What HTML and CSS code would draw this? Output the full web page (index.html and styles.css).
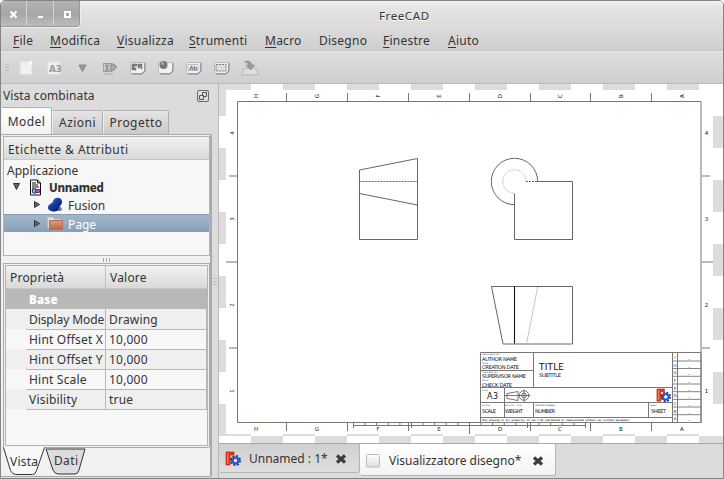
FILE: index.html
```html
<!DOCTYPE html>
<html lang="it">
<head>
<meta charset="utf-8">
<title>FreeCAD</title>
<link rel="stylesheet" href="styles.css">
</head>
<body>
<svg class="defs" width="0" height="0" aria-hidden="true">
  <defs>
    <linearGradient id="blue" x1="0" y1="0" x2="1" y2="1"><stop offset="0" stop-color="#5b8ae0"/><stop offset=".45" stop-color="#1539a0"/><stop offset="1" stop-color="#06145c"/></linearGradient>
    <linearGradient id="folder" x1="0" y1="0" x2="0" y2="1"><stop offset="0" stop-color="#d9a080"/><stop offset="1" stop-color="#c0623f"/></linearGradient>
    <linearGradient id="paper" x1="0" y1="0" x2="0" y2="1"><stop offset="0" stop-color="#fff"/><stop offset="1" stop-color="#ddd"/></linearGradient>
    <symbol id="logo" viewBox="0 0 16 16">
      <path d="M1 1h8v3H5v3h3v3H5v4H1z" fill="#ee3311" stroke="#a81b0c" stroke-width=".6"/>
      <path d="M2 2h1.500v11H2z" fill="#ff7a4a"/>
      <circle cx="10.500" cy="9.500" r="4.500" fill="none" stroke="#173a8e" stroke-width="2" stroke-dasharray="2 1.530"/>
      <circle cx="10.500" cy="9.500" r="2.900" fill="none" stroke="#2c5bc0" stroke-width="2.400"/>
      <circle cx="10.500" cy="9.500" r="1.500" fill="#eef"/>
    </symbol>
    <symbol id="cross" viewBox="0 0 12 12"><path d="M2 2.500l8 7M10 2.500l-8 7" stroke="#3c3c3c" stroke-width="3.200"/></symbol>
    <symbol id="page" viewBox="0 0 20 16"><path d="M2.500 2.500h14v8l-3 3h-11z" fill="#f1f1f1" stroke="#bbb"/><path d="M17 3v8l-3 3H4" fill="none" stroke="#858585"/></symbol>
  </defs>
</svg>
<div class="window">
  <header class="head">
    <div class="title">
      <div class="buttons">
        <span><svg width="9" height="9" viewBox="0 0 9 9"><path d="M1.500 1.500l6 6M7.500 1.500l-6 6" stroke="#fff" stroke-width="2.200"/></svg></span>
        <span><svg width="9" height="9" viewBox="0 0 9 9"><path d="M2 7h5" stroke="#fff" stroke-width="2"/></svg></span>
        <span><svg width="9" height="9" viewBox="0 0 9 9"><path d="M2 2h5v5H2z" fill="none" stroke="#fff" stroke-width="2"/></svg></span>
      </div>
      <div class="caption">FreeCAD</div>
    </div>
    <nav class="menu"><span><u>F</u>ile</span><span><u>M</u>odifica</span><span><u>V</u>isualizza</span><span><u>S</u>trumenti</span><span><u>M</u>acro</span><span>Disegno</span><span><u>F</u>inestre</span><span><u>A</u>iuto</span></nav>
  </header>
  <div class="toolbar">
    <i class="grip"></i>
    <svg width="20" height="16"><path d="M4 1.500h9l3 3V14.500H4z" fill="#f1f1f1" stroke="#ddd"/><circle cx="14.500" cy="3" r="2" fill="#fff"/></svg>
    <svg width="20" height="16"><path d="M3.500 1.500h13v13h-13z" fill="#eee" stroke="#ddd"/><text x="5" y="12" class="ic a3">A3</text></svg>
    <svg width="20" height="16"><path d="M7 5h7l-3.500 6.500z" fill="#999" stroke="#888"/></svg>
    <svg width="20" height="16"><path d="M3.500 3.500h8v8h-8z" fill="#ccc" stroke="#888" stroke-dasharray="2 1"/><path d="M5 5l5 6M9 5l-4 6M7 3v9" fill="none" stroke="#888"/><path d="M11 4h3l2.500 3-3 3.500H11z" fill="#aaa" stroke="#888"/><path d="M4 14h9" stroke="#aaa"/></svg>
    <svg width="20" height="16"><use href="#page"/><path d="M4 4h5v2H6v2h2v2H4zM10 4h4v5h-1V6h-1v2h-2z" fill="#777" stroke="#777" stroke-width=".6"/></svg>
    <svg width="20" height="16"><use href="#page"/><circle cx="7.500" cy="5" r="4" fill="#777"/><circle cx="6.500" cy="3.500" r="1.500" fill="#aaa"/></svg>
    <svg width="20" height="16"><use href="#page"/><path d="M4 4.500h10v6H4z" fill="#fff" stroke="#bbb"/><text x="5" y="9.800" class="ic ab">Ab</text></svg>
    <svg width="20" height="16"><use href="#page"/><path d="M4 4.500h10v6.500H4z" fill="#ddd" stroke="#777" stroke-dasharray="2 1"/></svg>
    <svg width="20" height="16"><path d="M5 8h10l3 4v3H2v-3z" fill="#ddd" stroke="#b4b4b4"/><path d="M4 2c4-2 7-1 8 3h3l-4.500 5L6 5h3C8 3 6 2 4 2z" fill="#999" stroke="#888" stroke-width=".5"/></svg>
  </div>
  <main class="body">
    <aside class="dock">
      <div class="dock-title"><span>Vista combinata</span>
        <svg width="12" height="12" viewBox="0 0 12 12"><rect x=".5" y=".5" width="11" height="11" rx="1.500" fill="#ddd" stroke="#686868"/><path d="M5.500 5V2.500h4v4H7M2.500 5.500h4v4h-4z" fill="none" stroke="#555"/></svg>
      </div>
      <div class="tabs"><span class="tab on">Model</span><span class="tab az">Azioni</span><span class="tab pr">Progetto</span></div>
      <div class="pane">
        <div class="tree">
          <div class="thead">Etichette &amp; Attributi</div>
          <div class="row"><span>Applicazione</span></div>
          <div class="row lvl1"><svg width="10" height="10"><path d="M1.500 1.500h6l-3 6z" fill="#666" stroke="#333"/></svg>
            <svg class="doc" width="14" height="17" viewBox="0 0 14 17"><path d="M1.500 1h7l3 3v12h-10z" fill="#fff" stroke="#111"/><path d="M8.500 1v3h3M3 4h4M3 6h6M3 8h7M3 10h2" fill="none" stroke="#111"/><circle cx="5.500" cy="12" r="2.300" fill="#4de" stroke="#223"/><path d="M6.500 10.500h4v3h-4z" fill="#e3c" stroke="#223" stroke-width=".7"/></svg><b>Unnamed</b></div>
          <div class="row lvl2"><svg width="10" height="10"><path d="M2.500 1.500v6l5-3z" fill="#666" stroke="#333"/></svg>
            <svg class="obj" width="16" height="16"><path d="M9 13c3 2 6 1 6-1l-2-3z" fill="#777"/><path d="M8 1.500C10 .200 15 .500 15 5c0 3-3 4-3 6s-3 4-6 3.500C2 14 .5 12 1 9.500S6 6 6 4.500 7 2 8 1.500z" fill="url(#blue)"/></svg><span>Fusion</span></div>
          <div class="row lvl2 sel"><svg width="10" height="10"><path d="M2.500 1.500v6l5-3z" fill="#666" stroke="#333"/></svg>
            <svg class="obj" width="16" height="16"><path d="M1 1.500h5l1 2h7V12H1z" fill="#e9e4de" stroke="#ccc"/><path d="M2.500 4.500h13v9h-13z" fill="url(#folder)" stroke="#b86c50"/></svg><span>Page</span></div>
        </div>
        <div class="split"><i></i></div>
        <div class="props">
          <div class="ptable">
            <div class="phead"><span>Proprietà</span><span>Valore</span></div>
            <div class="pbase">Base</div>
            <div class="prow"><i></i><span class="snug">Display Mode</span><span>Drawing</span></div>
            <div class="prow"><i></i><span>Hint Offset X</span><span>10,000</span></div>
            <div class="prow"><i></i><span>Hint Offset Y</span><span>10,000</span></div>
            <div class="prow"><i></i><span>Hint Scale</span><span>10,000</span></div>
            <div class="prow"><i></i><span>Visibility</span><span>true</span></div>
          </div>
        </div>
        <svg class="ptabs" width="209" height="29" viewBox="3 447 209 29">
          <path d="M46 449l7 21q2 4 5 4h17q3 0 4-4l6-21z" fill="#dcdcdc" stroke="#333"/>
          <path d="M3.500 447.500l7 23q2 4 5 4h17q3 0 4-4l8-23z" fill="#f8f8f8" stroke="#333"/>
          <path d="M4 447.500h40" stroke="#f8f8f8"/><path d="M45 447.500h164" stroke="#aaa"/>
          <text x="10" y="466" textLength="28" class="pt">Vista</text><text x="54" y="465" textLength="24" class="pt">Dati</text>
        </svg>
      </div>
    </aside>
    <div class="sash"><i></i></div>
    <section class="mdi">
      <div class="canvas">
        <svg class="sheet" width="504" height="359" viewBox="219 84 504 359">
          <path d="M226 90h487v344H226z" fill="#fff"/>
          <g fill="none" stroke="#777">
            <path d="M237.500 101.500h463.500v321H237.500z"/>
            <path d="M286.500 93v8M347.500 93v8M408.500 93v8M469.500 93v8M530.500 93v8M590.500 93v8M651.500 93v8M286.500 423v8M347.500 423v8M408.500 423v8M469.500 423v11M530.500 423v8M590.500 423v8M651.500 423v8"/>
            <path d="M353.500 428v-6M411.500 428v-6M469.500 428v-6M527.500 428v-6M585.500 428v-6M353 425.500h232.500"/>
            <path d="M365.100 425v-3M376.700 425v-3M388.300 425v-3M399.900 425v-3M423.100 425v-3M434.700 425v-3M446.300 425v-3M457.900 425v-3M481.100 425v-3M492.700 425v-3M504.300 425v-3M515.900 425v-3M539.100 425v-3M550.700 425v-3M562.300 425v-3M573.900 425v-3"/>
          </g>
          <path d="M229 176h8M226 262h11M229 348h8M701 176h9M701 262h12M701 348h9" stroke="#bbb" stroke-width="2"/>
          <g class="mark">
            <text transform="translate(258 96)rotate(-90)">H</text><text transform="translate(319 96)rotate(-90)">G</text><text transform="translate(380 96)rotate(-90)">F</text><text transform="translate(441 96)rotate(-90)">E</text><text transform="translate(502 96)rotate(-90)">D</text><text transform="translate(562 96)rotate(-90)">C</text><text transform="translate(623 96)rotate(-90)">B</text><text transform="translate(684 96)rotate(-90)">A</text>
            <text transform="translate(234 133)rotate(-90)">4</text><text transform="translate(234 219)rotate(-90)">3</text><text transform="translate(234 305)rotate(-90)">2</text><text transform="translate(234 391)rotate(-90)">1</text>
            <text x="706.500" y="135">4</text><text x="706.500" y="221">3</text><text x="706.500" y="307">2</text><text x="706.500" y="393">1</text>
            <text x="256" y="430.500">H</text><text x="317" y="430.500">G</text><text x="378" y="430.500">F</text><text x="439" y="430.500">E</text><text x="500" y="430.500">D</text><text x="560" y="430.500">C</text><text x="621" y="430.500">B</text><text x="682" y="430.500">A</text>
          </g>
          <g fill="none" stroke="#555" stroke-width=".9">
            <path d="M359.500 170l58-11.500v81h-58zM359.500 193.500l58 11.500"/>
            <path d="M359.500 181.500h58" stroke-dasharray="2 1"/>
            <path d="M537.700 181.500a23.200 23.200 0 1 0-23.200 23.200M537.500 181.500h35v58h-58v-46"/>
            <path d="M526 181.500h12" stroke-dasharray="2 1"/>
            <path d="M526.200 181.500a11.700 11.700 0 1 0-11.700 11.700" stroke="#aaa" stroke-dasharray="1.500 1"/>
            <path d="M491.500 286.500h81v57.500h-69.500z"/><path d="M514.500 286.500v57" stroke="#111" stroke-width="1.100"/>
            <path d="M537.700 287l-11.200 57" stroke="#aaa" stroke-dasharray="2 .700"/>
          </g>
          <g fill="none" stroke="#777">
            <path d="M480.500 352.500h220.500v70H480.500zM533.500 352.500v35M480.500 370.500h53M480.500 387.500h191.500M480.500 402.500h191.500M480.500 417.500h191.500M504.500 387.500v30M533.500 402.500v15M648.500 402.500v15M672.500 352.500v70M677.500 352.500v70"/>
            <path d="M672 361h29M672 368.500h29M672 376.300h29M672 384h29M672 391.700h29M672 399.400h29M672 407h29M672 414.700h29" stroke-width=".9"/>
          </g>
          <g fill="none" stroke="#555" stroke-width=".8"><path d="M507 393.500l11-2v9l-11-2zM504.500 395.500h26M524 389.500v12"/><circle cx="524" cy="395.500" r="4.800"/><circle cx="524" cy="395.500" r="2.400"/></g>
          <g class="blk">
            <text x="482" y="360.500" textLength="35">AUTHOR NAME</text><text x="482" y="369" textLength="37">CREATION DATE</text><text x="482" y="377.800" textLength="44">SUPERVISOR NAME</text><text x="482" y="386.500" textLength="30">CHECK DATE</text>
            <text x="539" y="369.500" textLength="25" class="big">TITLE</text><text x="539" y="377" textLength="22">SUBTITLE</text>
            <text x="487" y="398.500" textLength="11" class="mid">A3</text>
            <text x="482" y="413" textLength="14">SCALE</text><text x="505" y="413" textLength="18">WEIGHT</text><text x="535" y="413" textLength="20">NUMBER</text><text x="651" y="413" textLength="15">SHEET</text>
          </g>
          <g class="tiny">
            <text x="482" y="355.300" textLength="18">DESIGNED BY:</text><text x="482" y="363.800" textLength="7">DATE:</text><text x="482" y="372.800" textLength="16">CHECKED BY:</text><text x="482" y="381.300" textLength="7">DATE:</text><text x="482" y="390.500" textLength="6">SIZE</text>
            <text x="482" y="405.500" textLength="8">SCALE</text><text x="505" y="405.500" textLength="17">WEIGHT (kg)</text><text x="535" y="405.500" textLength="20">DRAWING NUMBER</text><text x="650" y="405.500" textLength="7">SHEET</text>
            <text x="481.500" y="421" textLength="149" class="ital">This drawing is our property; it can't be reproduced or communicated without our written agreement.</text>
          </g>
          <g class="rev">
            <text x="675" y="358.500">I</text><text x="675" y="366.500">H</text><text x="675" y="374">G</text><text x="675" y="382">F</text><text x="675" y="389.500">E</text><text x="675" y="397">D</text><text x="675" y="405">C</text><text x="675" y="412.500">B</text><text x="675" y="420">A</text>
            <text x="689" y="358.500">_</text><text x="689" y="366.500">_</text><text x="689" y="374">_</text><text x="689" y="382">_</text><text x="689" y="389.500">_</text><text x="689" y="397">_</text><text x="689" y="405">_</text><text x="689" y="412.500">_</text><text x="689" y="420">_</text>
          </g>
          <use href="#logo" x="656" y="388" width="15" height="15"/>
        </svg>
      </div>
      <div class="mtabs">
        <div class="mtab"><svg width="16" height="16"><use href="#logo"/></svg><span>Unnamed : 1*</span><svg width="12" height="12"><use href="#cross"/></svg></div>
        <div class="mtab active"><svg width="14" height="14"><rect x=".5" y=".5" width="13" height="12.500" rx="1" fill="url(#paper)" stroke="#bbb"/></svg><span>Visualizzatore disegno*</span><svg width="12" height="12"><use href="#cross"/></svg></div>
      </div>
    </section>
  </main>
</div>
</body>
</html>
```
FILE: styles.css
```css
* { box-sizing: border-box; }
body { margin: 0; background: #fff; font: 12px/18px "Noto Sans", "DejaVu Sans", sans-serif; letter-spacing: .45px; color: #333; overflow: hidden; }
svg { display: block; flex: none; }
.defs { position: absolute; }
.window { width: 724px; height: 479px; border: 1px solid #858585; border-radius: 5px 5px 0 0; background: #dcdcdc; display: flex; flex-direction: column; overflow: hidden; white-space: nowrap; }
.head { height: 50px; background: linear-gradient(#f2f2f2, #e6e6e6 10%, #cfcfcf); border-bottom: 1px solid #c4c4c4; }
.title { height: 28px; display: grid; grid-template-columns: 81px 1fr; }
.buttons { width: 79px; height: 26px; display: grid; grid-template-columns: 26px 27px 26px; background: linear-gradient(#b4b4b4, #a6a6a6 50%, #bcbcbc); border-right: 1px solid #999; border-bottom: 1px solid #989898; border-radius: 0 0 4px 0; box-shadow: 1px 1px #eee; }
.buttons span { display: flex; align-items: center; justify-content: center; padding-top: 2px; border-right: 1px solid #d4d4d4; }
.buttons span:last-child { border: 0; }
.caption { padding: 6px 0 0 297px; font-size: 11.5px; letter-spacing: .6px; text-shadow: 0 1px #fff; }
.menu { display: grid; grid-template-columns: 37px 67px 72px 76px 54px 64px 65px 60px; padding: 3px 0 0 12px; letter-spacing: .25px; }
.menu u { text-underline-offset: 2px; }
.toolbar { height: 33px; flex: none; display: flex; align-items: center; gap: 8px; padding-left: 4px; background: linear-gradient(#dedede, #cfcfcf); border-top: 1px solid #e6e6e6; border-bottom: 1px solid #b8b8b8; }
.toolbar .grip { width: 4px; height: 8px; background: repeating-linear-gradient(#bbb 0 1px, transparent 1px 3px); margin-right: -1px; }
.toolbar svg + svg { margin-left: 0; }
.ic { font: bold 9px "DejaVu Sans"; fill: #999; letter-spacing: -.5px; }
.ab { font-size: 6px; fill: #777; }
.body { flex: 1; display: flex; min-height: 0; }
.dock { width: 211px; display: flex; flex-direction: column; padding-bottom: 1px; }
.dock-title { height: 25px; display: flex; justify-content: space-between; align-items: center; padding: 0 3px 0 2px; letter-spacing: .1px; }
.tabs { height: 27px; display: flex; align-items: flex-end; }
.tab { height: 24px; border: 1px solid #b0b0b0; border-left-color: #eee; border-bottom: 0; border-radius: 2px 2px 0 0; background: linear-gradient(#e4e4e4, #cacaca); padding-top: 3px; text-align: center; width: 51px; }
.tab.pr { width: 66px; }
.tab.on { width: 51px; height: 27px; padding-top: 5px; background: linear-gradient(#fff, #f1f1f1); }
.pane { flex: 1; border: 1px solid #aaa; border-left: 0; border-right-width: 2px; border-radius: 2px; background: #f1f1f1; padding: 1px 0 0 2px; display: flex; flex-direction: column; }
.tree { width: 207px; height: 120px; border: 1px solid #b4b4b4; background: #f7f7f7; letter-spacing: 0; }
.thead { height: 23px; padding: 4px 4px 0; letter-spacing: .45px; background: linear-gradient(#f2f2f2, #d9d9d9); border-bottom: 1px solid #c8c8c8; }
.row { height: 18px; display: flex; align-items: center; padding-left: 3px; }
.row span, .row b { padding-top: 2px; }
.row:nth-child(2) span { padding-top: 3px; }
.lvl1 { padding-left: 8px; }
.lvl1 .doc { margin: 0 6px 0 7px; }
.lvl2 { padding-left: 28px; }
.lvl2 .obj { margin: 0 5px 0 5px; }
.sel { color: #fff; background: linear-gradient(#a3b7ca, #869fb6); border-top: 1px solid #849bb2; }
b { font-size: 11.5px; font-weight: 800; letter-spacing: -.3px; }
.split { height: 7px; width: 207px; display: flex; align-items: center; justify-content: center; }
.split i { width: 8px; height: 4px; background: repeating-linear-gradient(90deg, #aaa 0 1px, transparent 1px 3px); }
.props { width: 207px; height: 184px; border: 1px solid #aaa; border-bottom: 0; padding: 1px; }
.ptable { border: 1px solid #b4b4b4; height: 181px; background: #f7f7f7; letter-spacing: .2px; }
.phead { height: 23px; display: grid; grid-template-columns: 100px 1fr; background: linear-gradient(#f2f2f2, #d9d9d9); border-bottom: 1px solid #c8c8c8; }
.phead span { padding: 3px 4px; }
.phead span:first-child { border-right: 1px solid #c0c0c0; }
.pbase { height: 20px; padding: 2px 23px 0; background: #b8b8b8; color: #fff; font-size: 11.5px; font-weight: 900; letter-spacing: .2px; }
.prow { height: 20px; display: grid; grid-template-columns: 20px 80px 1fr; }
.prow span { border-bottom: 1px solid #b8b8b8; border-right: 1px solid #b8b8b8; padding: 2px 0 0 3px; }
.prow .snug { letter-spacing: -.1px; }
.prow:nth-child(odd) { background: #efefef; }
.pt { font-size: 12px; fill: #333; letter-spacing: 0; }
.sash { width: 6px; display: flex; align-items: center; justify-content: center; }
.sash i { width: 4px; height: 7px; background: repeating-linear-gradient(#bbb 0 1px, transparent 1px 3px); }
.mdi { flex: 1; min-width: 0; border-left: 1px solid #b8b8b8; display: flex; flex-direction: column; }
.canvas { height: 359px; overflow: hidden; background: conic-gradient(#fff 25%, #dcdcdc 0 50%, #fff 0 75%, #dcdcdc 0) 0 0 / 64px 64px; }
.mark { font: 5.5px "DejaVu Sans"; text-anchor: middle; fill: #111; letter-spacing: 0; }
.blk { font: 5.2px "DejaVu Sans"; fill: #111; letter-spacing: 0; }
.blk .big { font-size: 9px; }
.blk .mid { font-size: 8px; }
.tiny { font: 2.200px "DejaVu Sans"; fill: #333; letter-spacing: 0; }
.tiny .ital { font: italic bold 2.500px "DejaVu Sans Mono"; }
.rev { font: 4px "DejaVu Sans"; text-anchor: middle; fill: #333; letter-spacing: 0; }
.mtabs { height: 35px; display: flex; border-top: 1px solid #aaa; align-items: flex-start; letter-spacing: 0; }
.mtab { width: 141px; height: 29px; display: flex; align-items: center; background: linear-gradient(#d0d0d0, #dedede); border: 1px solid #b4b4b4; border-top: 0; border-left: 0; border-radius: 0 0 3px 3px; padding: 2px 0 0 6px; }
.mtab span { width: 86px; flex: none; margin: 0 0 0 8px; }
.mtab.active { width: 196px; height: 32px; background: linear-gradient(#fff, #f3f3f3); }
.active span { width: 143px; margin-left: 9px; }
```
